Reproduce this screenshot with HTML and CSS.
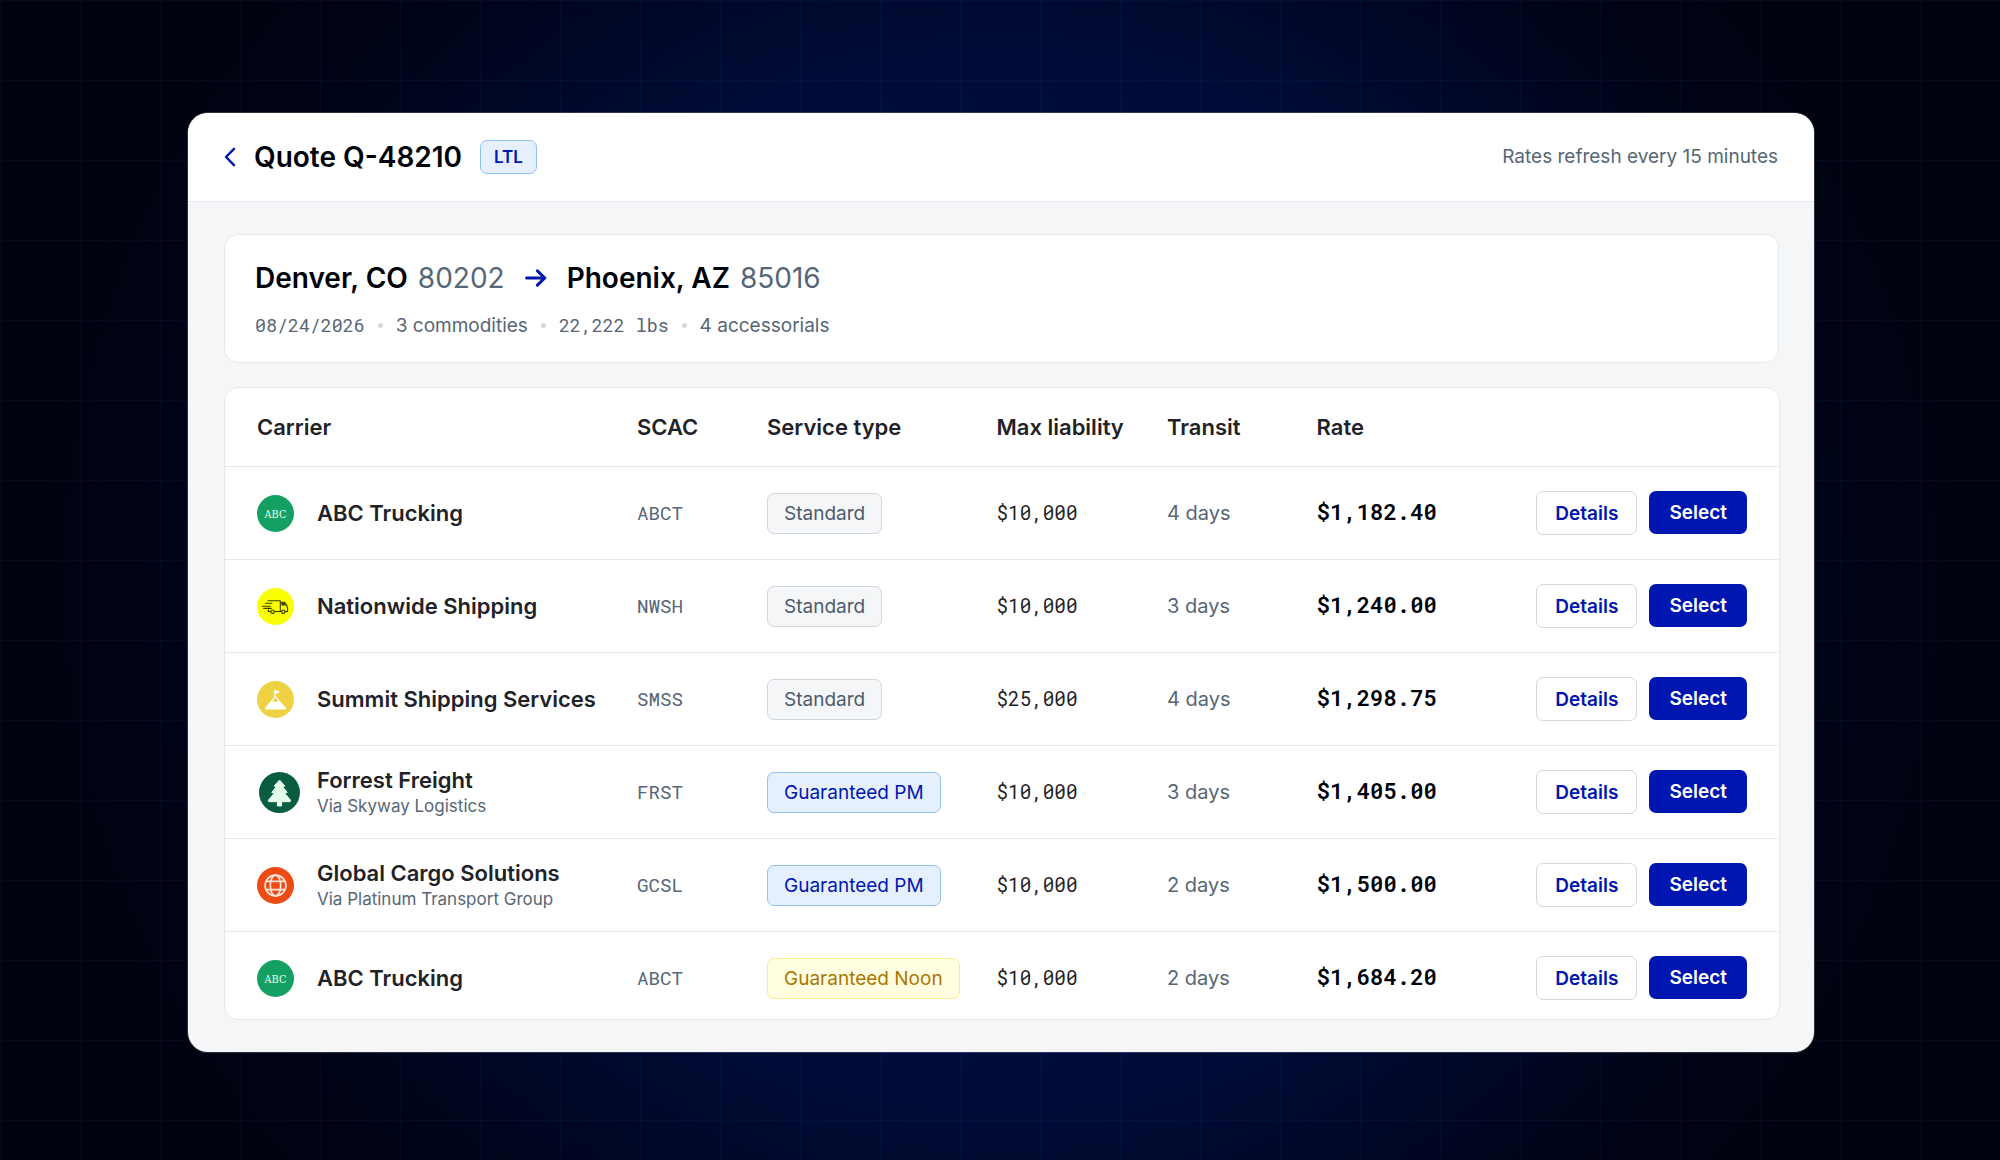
FILE: index.html
```
<!DOCTYPE html>
<html lang="en">
  <head>
    <meta charset="UTF-8" />
    <meta name="viewport" content="width=device-width, initial-scale=1.0" />
    <title>Quote Q-48210</title>
    <link rel="stylesheet" href="styles.css">
  </head>
  <body>
    <!-- carrier logos -->
    <svg class="sprite" xmlns="http://www.w3.org/2000/svg">
      <symbol id="logo-abc" viewBox="0 0 37 37">
        <circle cx="18.5" cy="18.5" r="18.5" fill="#14a062" />
        <text x="7.6" y="22.6" textLength="21.8" lengthAdjust="spacingAndGlyphs" class="logo-text">ABC</text>
      </symbol>
      <symbol id="logo-truck" viewBox="0 0 37 37">
        <circle cx="18.5" cy="18.5" r="18.5" fill="#faff00" />
        <g fill="none" stroke="#3d3f00" stroke-width="1.1" stroke-linecap="round" stroke-linejoin="round">
          <path d="M11 12.8h12.3v10.7h-6M13.6 23.5h-2.4l.4-1.6" />
          <path d="M23.3 14.2h4.2c1.6 1.6 2.8 3.6 3.1 6v3.3h-2.8M24.8 23.5h-1.5" />
          <path d="M8.5 15.2h6.3M5.2 18.2h8M6.7 20.4h7.6" />
          <circle cx="15.5" cy="23.7" r="1.7" />
          <circle cx="26.3" cy="23.7" r="1.7" />
        </g>
        <path d="M24.4 14.4h3l1.7 3.2h-4.7z" fill="#3d3f00" />
      </symbol>
      <symbol id="logo-summit" viewBox="0 0 37 37">
        <circle cx="18.5" cy="18.5" r="18.5" fill="#eed242" />
        <path d="M17.9 9.3v6.2" stroke="#fff" stroke-width="1.4" stroke-linecap="round" />
        <path d="M18.2 9l5.3 1.9-5.3 2.1z" fill="#fff" />
        <path d="M18.4 14.8L28.6 26.6c.8 1 .3 2-.8 2H9.1c-1.1 0-1.5-1-.8-2z" fill="#fff" />
        <path d="M18.4 16.8l3.4 4.1-1.9-.6-1.5 1.2-1.6-1.2-1.8.6z" fill="#eed242" />
      </symbol>
      <symbol id="logo-tree" viewBox="0 0 41 41">
        <circle cx="20.5" cy="20.5" r="20.5" fill="#0a5c40" />
        <path d="M20.5 8l5.3 6-1.9 1 4.3 5.4-2.4.9 5.6 6.7c.6.9.2 1.7-.8 1.7h-8v4.3h-4.2v-4.3h-8c-1 0-1.4-.8-.8-1.7l5.6-6.7-2.4-.9 4.3-5.4-1.9-1z" fill="#e2fde9" stroke="#e2fde9" stroke-linejoin="round" />
      </symbol>
      <symbol id="logo-globe" viewBox="0 0 37 37">
        <circle cx="18.5" cy="18.5" r="18.5" fill="#ee4b12" />
        <g fill="none" stroke="#fde6dc" stroke-width="1.7">
          <circle cx="18.5" cy="18.5" r="10.4" />
          <ellipse cx="18.5" cy="18.5" rx="5.2" ry="10.4" />
          <path d="M9.2 14.4h18.6M9.2 22.6h18.6" />
        </g>
      </symbol>
    </svg>

    <main class="window">
      <header class="topbar">
        <svg class="back" viewBox="0 0 12 20"><path d="M10 1.8L2 10l8 8.2" /></svg>
        <h1>Quote Q-48210</h1>
        <span class="mode">LTL</span>
        <span class="refresh">Rates refresh every 15 minutes</span>
      </header>

      <section class="summary">
        <div class="route">
          <strong>Denver, CO</strong>
          <span>80202</span>
          <svg class="arrow" viewBox="0 0 22 18"><path d="M1.6 9h18M12.4 1.8L19.8 9l-7.4 7.2" /></svg>
          <strong>Phoenix, AZ</strong>
          <span>85016</span>
        </div>
        <div class="meta">
          <span class="mono">08/24/2026</span>
          <i class="dot"></i>
          <span>3 commodities</span>
          <i class="dot"></i>
          <span class="mono">22,222 lbs</span>
          <i class="dot"></i>
          <span>4 accessorials</span>
        </div>
      </section>

      <section class="rates">
        <div class="row head">
          <div>Carrier</div>
          <div>SCAC</div>
          <div>Service type</div>
          <div>Max liability</div>
          <div>Transit</div>
          <div>Rate</div>
        </div>

        <div class="row">
          <div class="carrier">
            <svg class="logo"><use href="#logo-abc" /></svg>
            <div class="name">ABC Trucking</div>
          </div>
          <div class="scac">ABCT</div>
          <div><span class="badge">Standard</span></div>
          <div class="liability">$10,000</div>
          <div class="transit">4 days</div>
          <div class="rate">$1,182.40</div>
          <div class="actions">
            <button class="btn">Details</button>
            <button class="btn btn-primary">Select</button>
          </div>
        </div>

        <div class="row">
          <div class="carrier">
            <svg class="logo"><use href="#logo-truck" /></svg>
            <div class="name">Nationwide Shipping</div>
          </div>
          <div class="scac">NWSH</div>
          <div><span class="badge">Standard</span></div>
          <div class="liability">$10,000</div>
          <div class="transit">3 days</div>
          <div class="rate">$1,240.00</div>
          <div class="actions">
            <button class="btn">Details</button>
            <button class="btn btn-primary">Select</button>
          </div>
        </div>

        <div class="row">
          <div class="carrier">
            <svg class="logo"><use href="#logo-summit" /></svg>
            <div class="name">Summit Shipping Services</div>
          </div>
          <div class="scac">SMSS</div>
          <div><span class="badge">Standard</span></div>
          <div class="liability">$25,000</div>
          <div class="transit">4 days</div>
          <div class="rate">$1,298.75</div>
          <div class="actions">
            <button class="btn">Details</button>
            <button class="btn btn-primary">Select</button>
          </div>
        </div>

        <div class="row">
          <div class="carrier">
            <svg class="logo logo-lg"><use href="#logo-tree" /></svg>
            <div class="name">Forrest Freight<small>Via Skyway Logistics</small></div>
          </div>
          <div class="scac">FRST</div>
          <div><span class="badge badge-blue">Guaranteed PM</span></div>
          <div class="liability">$10,000</div>
          <div class="transit">3 days</div>
          <div class="rate">$1,405.00</div>
          <div class="actions">
            <button class="btn">Details</button>
            <button class="btn btn-primary">Select</button>
          </div>
        </div>

        <div class="row">
          <div class="carrier">
            <svg class="logo"><use href="#logo-globe" /></svg>
            <div class="name">Global Cargo Solutions<small>Via Platinum Transport Group</small></div>
          </div>
          <div class="scac">GCSL</div>
          <div><span class="badge badge-blue">Guaranteed PM</span></div>
          <div class="liability">$10,000</div>
          <div class="transit">2 days</div>
          <div class="rate">$1,500.00</div>
          <div class="actions">
            <button class="btn">Details</button>
            <button class="btn btn-primary">Select</button>
          </div>
        </div>

        <div class="row">
          <div class="carrier">
            <svg class="logo"><use href="#logo-abc" /></svg>
            <div class="name">ABC Trucking</div>
          </div>
          <div class="scac">ABCT</div>
          <div><span class="badge badge-yellow">Guaranteed Noon</span></div>
          <div class="liability">$10,000</div>
          <div class="transit">2 days</div>
          <div class="rate">$1,684.20</div>
          <div class="actions">
            <button class="btn">Details</button>
            <button class="btn btn-primary">Select</button>
          </div>
        </div>
      </section>
    </main>
  </body>
</html>
```
FILE: styles.css
```
* {
  box-sizing: border-box;
}

body {
  margin: 0;
  height: 1160px;
  padding: 113px 0 0 188px;
  overflow: hidden;
  font-family: Inter, "Liberation Sans", sans-serif;
  color: #1f2328;
  background-color: #00020d;
  background-image:
    linear-gradient(rgba(60, 90, 200, 0.07) 1px, transparent 1px),
    linear-gradient(90deg, rgba(60, 90, 200, 0.07) 1px, transparent 1px),
    radial-gradient(ellipse 1000px 950px at 50% 50%, #000f45 0%, #000c38 55%, #000418 82%, #00020d 100%);
  background-size: 80px 80px, 80px 80px, 100% 100%;
}

.sprite {
  display: none;
}

.logo-text {
  font-family: "DejaVu Serif", serif;
  font-size: 11px;
  fill: #e8fff3;
}

.window {
  width: 1626px;
  height: 939px;
  background: #f5f6f8;
  border-radius: 20px;
  overflow: hidden;
  box-shadow: 0 0 0 1px rgba(255, 255, 255, 0.18);
}

.topbar {
  display: flex;
  align-items: center;
  height: 89px;
  padding: 0 36px;
  background: #fff;
  border-bottom: 1px solid #e4e7eb;
}

.back {
  width: 12px;
  height: 20px;
  margin-right: 18px;
}

.back path,
.arrow path {
  fill: none;
  stroke: #0016b0;
  stroke-width: 2.5;
  stroke-linecap: round;
  stroke-linejoin: round;
}

h1 {
  margin: 0;
  font-size: 28px;
  font-weight: 600;
  color: #00020a;
}

.mode {
  height: 34px;
  margin-left: 18px;
  padding: 0 13px;
  font-size: 17px;
  font-weight: 600;
  line-height: 32px;
  color: #0016b0;
  background: #e6f0fd;
  border: 1px solid #90c0f8;
  border-radius: 7px;
}

.refresh {
  margin-left: auto;
  padding-bottom: 2px;
  font-size: 19px;
  color: #566676;
}

.summary {
  height: 129px;
  margin: 32px 35px 0 36px;
  padding: 26px 30px;
  background: #fff;
  border: 1px solid #e4e9ee;
  border-radius: 14px;
}

.route {
  display: flex;
  align-items: center;
  gap: 10px;
  font-size: 28px;
  line-height: 34px;
  color: #566676;
}

.route strong {
  font-weight: 600;
  color: #00020a;
}

.arrow {
  width: 22px;
  height: 18px;
  margin: 0 10px;
}

.arrow path {
  stroke-width: 3;
}

.meta {
  display: flex;
  align-items: center;
  gap: 13px;
  margin-top: 18px;
  font-size: 19px;
  line-height: 24px;
  color: #566676;
}

.dot {
  width: 5px;
  height: 5px;
  border-radius: 50%;
  background: #d3d8de;
}

.mono,
.scac,
.liability,
.rate {
  font-family: "Roboto Mono", "Noto Sans Mono", "Liberation Mono", monospace;
}

.mono {
  padding-bottom: 1px;
  font-size: 18.3px;
}

.rates {
  height: 633px;
  margin: 24px 34px 0 36px;
  background: #fff;
  border: 1px solid #e6e8eb;
  border-radius: 14px;
  overflow: hidden;
}

.row {
  display: grid;
  grid-template-columns: 380px 130px 229.5px 170.5px 149.5px 1fr auto;
  align-items: center;
  height: 93px;
  padding: 0 32px;
  border-bottom: 1px solid #e6e8eb;
}

.head {
  height: 79px;
  font-size: 22px;
  font-weight: 600;
}

.carrier {
  display: flex;
  align-items: center;
}

.logo {
  width: 37px;
  height: 37px;
  margin-right: 23px;
}

.logo-lg {
  width: 41px;
  height: 41px;
  margin: 0 17px 0 2px;
}

.name {
  font-size: 22px;
  font-weight: 600;
  line-height: 28px;
}

.name small {
  display: block;
  font-size: 17px;
  font-weight: 400;
  line-height: 24px;
  color: #566676;
}

.scac {
  padding-bottom: 2px;
  font-size: 19.2px;
  color: #566676;
}

.badge {
  display: inline-block;
  height: 41px;
  padding: 0 16px;
  font-size: 19px;
  line-height: 39px;
  color: #4c5b6b;
  background: #f5f6f8;
  border: 1px solid #d0d6dd;
  border-radius: 7px;
}

.badge-blue {
  color: #0016b0;
  background: #e6f0fd;
  border-color: #90c0f8;
}

.badge-yellow {
  color: #a87800;
  background: #fffee0;
  border-color: #f8ec90;
}

.liability {
  padding-bottom: 2px;
  font-size: 19.3px;
}

.transit {
  font-size: 20px;
  color: #566676;
}

.rate {
  padding-bottom: 3px;
  font-size: 22.3px;
  font-weight: 600;
  color: #00020a;
}

.actions {
  display: flex;
  gap: 12px;
}

.btn {
  height: 44px;
  padding: 0 18px;
  font-family: inherit;
  font-size: 19px;
  font-weight: 600;
  color: #0016b0;
  background: #fff;
  border: 1px solid #d3d7de;
  border-radius: 7px;
}

.btn-primary {
  height: 43px;
  padding: 0 20px;
  color: #fff;
  background: #0016b0;
  border: none;
}
```
